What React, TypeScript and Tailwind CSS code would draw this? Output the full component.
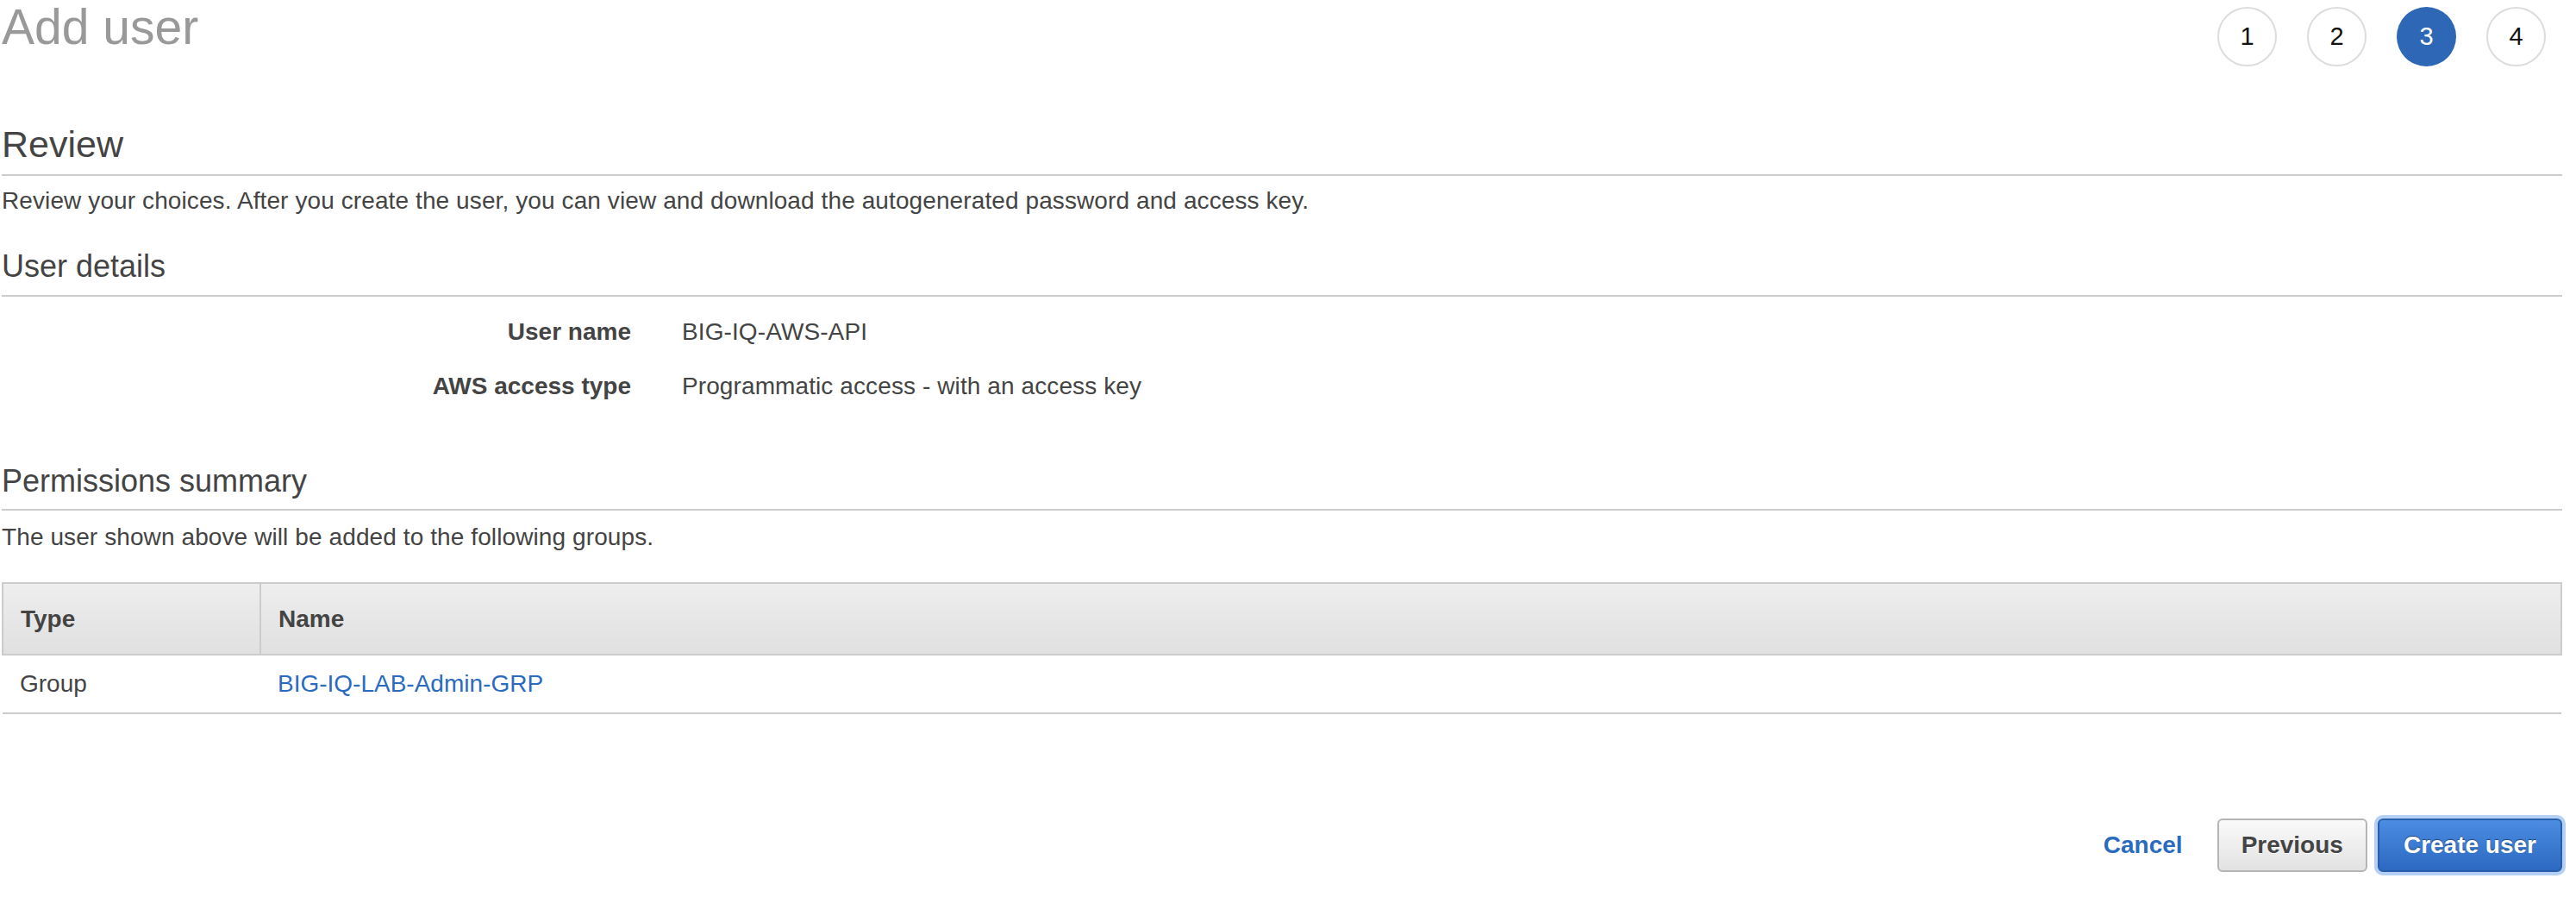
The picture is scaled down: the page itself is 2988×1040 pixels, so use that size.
import type { ReactNode } from 'react';

// Wizard step indicator: four numbered circles, the current one filled.
const steps = [1, 2, 3, 4];
const currentStep = 3;

const details: { label: string; value: string }[] = [
  { label: 'User name', value: 'BIG-IQ-AWS-API' },
  { label: 'AWS access type', value: 'Programmatic access - with an access key' },
];

function SectionHeading({ children, className }: { children: ReactNode; className: string }) {
  return (
    <h2 className={`border-b-2 border-[#cccccc] text-[#444444] leading-none font-normal ${className}`}>
      {children}
    </h2>
  );
}

export default function App() {
  return (
    <div className="min-h-screen bg-white pl-[2px] pr-[16px] font-['Liberation_Sans',Arial,sans-serif] text-[#444444]">
      {/* Header */}
      <div className="flex items-start justify-between h-[77px]">
        <h1 className="pt-[3px] text-[57px] leading-none text-[#999999] font-normal">Add user</h1>
        <ol className="flex gap-[35px] pt-[8px] pr-[19px]">
          {steps.map((s) => (
            <li
              key={s}
              className={`flex h-[69px] w-[69px] items-center justify-center rounded-full text-[29px] leading-none ${
                s === currentStep
                  ? 'bg-[#2e67b5] text-white'
                  : 'border-2 border-[#dddddd] bg-white text-[#111111]'
              }`}
            >
              {s}
            </li>
          ))}
        </ol>
      </div>

      {/* Review */}
      <SectionHeading className="mt-[69px] pb-[13px] text-[43px]">Review</SectionHeading>
      <p className="mt-[15px] text-[28px] leading-none tracking-[0.1px]">
        Review your choices. After you create the user, you can view and download the autogenerated
        password and access key.
      </p>

      {/* User details */}
      <SectionHeading className="mt-[44px] pb-[15px] text-[36px]">User details</SectionHeading>
      <dl className="mt-[27px] grid grid-cols-[730px_1fr] gap-x-[59px] gap-y-[35px] text-[28px] leading-none">
        {details.map((d) => (
          <div key={d.label} className="contents">
            <dt className="text-right font-bold">{d.label}</dt>
            <dd className="tracking-[0.1px]">{d.value}</dd>
          </div>
        ))}
      </dl>

      {/* Permissions summary */}
      <SectionHeading className="mt-[78px] pb-[14px] text-[36px]">Permissions summary</SectionHeading>
      <p className="mt-[17px] text-[28px] leading-none tracking-[0.1px]">
        The user shown above will be added to the following groups.
      </p>

      <table className="mt-[38px] w-full border-collapse text-[28px] leading-none">
        <thead>
          <tr className="bg-gradient-to-b from-[#eeeeee] to-[#e0e0e0]">
            <th className="h-[83px] w-[299px] border-2 border-[#cccccc] px-[20px] text-left font-bold">
              Type
            </th>
            <th className="h-[83px] border-2 border-[#cccccc] px-[20px] text-left font-bold">Name</th>
          </tr>
        </thead>
        <tbody>
          <tr className="border-b-2 border-[#cccccc]">
            <td className="h-[68px] px-[20px]">Group</td>
            <td className="h-[68px] px-[20px]">
              <a href="#" className="text-[#2b6bbf]">
                BIG-IQ-LAB-Admin-GRP
              </a>
            </td>
          </tr>
        </tbody>
      </table>

      {/* Footer actions */}
      <div className="mt-[121px] flex items-center justify-end gap-[40px]">
        <a href="#" className="text-[28px] font-bold leading-none text-[#2b6bbf]">
          Cancel
        </a>
        <div className="flex items-center gap-[12px]">
          <button
            type="button"
            className="h-[62px] rounded-[6px] border-2 border-[#b5b5b5] bg-gradient-to-b from-[#fafafa] to-[#e2e2e2] px-[26px] text-[28px] font-bold text-[#444444] [text-shadow:0_1px_0_#ffffff]"
          >
            Previous
          </button>
          <button
            type="button"
            className="h-[62px] rounded-[6px] border-2 border-[#2a5ea8] bg-gradient-to-b from-[#4b8de2] to-[#2c69c2] px-[28px] text-[28px] font-bold text-white shadow-[0_0_0_4px_rgba(120,170,240,0.55)] [text-shadow:0_-1px_1px_rgba(0,0,0,0.45)]"
          >
            Create user
          </button>
        </div>
      </div>
    </div>
  );
}
